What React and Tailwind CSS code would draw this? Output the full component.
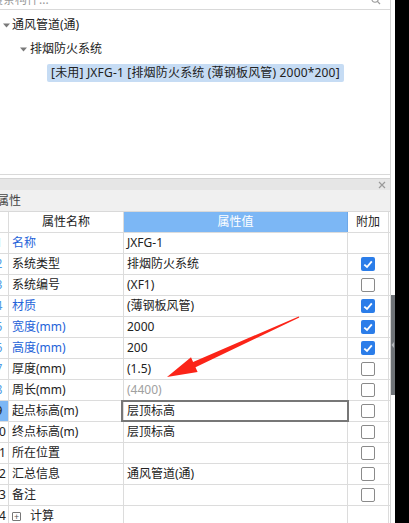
const rows = [
  { n: 1, name: "名称", blue: true, value: "JXFG-1", check: null },
  { n: 2, name: "系统类型", value: "排烟防火系统", check: true },
  { n: 3, name: "系统编号", value: "(XF1)", check: false },
  { n: 4, name: "材质", blue: true, value: "(薄钢板风管)", check: true },
  { n: 5, name: "宽度(mm)", blue: true, value: "2000", check: true },
  { n: 6, name: "高度(mm)", blue: true, value: "200", check: true },
  { n: 7, name: "厚度(mm)", value: "(1.5)", check: false },
  { n: 8, name: "周长(mm)", value: "(4400)", grey: true, check: false },
  { n: 9, name: "起点标高(m)", value: "层顶标高", check: false, selected: true },
  { n: 10, name: "终点标高(m)", value: "层顶标高", check: false },
  { n: 11, name: "所在位置", value: "", check: false },
  { n: 12, name: "汇总信息", value: "通风管道(通)", check: false },
  { n: 13, name: "备注", value: "", check: false },
  { n: 14, name: "计算", value: "", check: null, expand: true },
];

function Caret() {
  return (
    <svg width="7" height="5" viewBox="0 0 7 5" className="shrink-0">
      <path d="M0 0.5 L7 0.5 L3.5 4.5 Z" fill="#7a7a7a" />
    </svg>
  );
}

function Checkbox({ checked }) {
  if (checked) {
    return (
      <div className="w-[14px] h-[14px] rounded-[2px] bg-[#2b7de9] flex items-center justify-center">
        <svg width="10" height="9" viewBox="0 0 10 9">
          <path d="M1.3 4.6 L4 7 L8.8 1.4" fill="none" stroke="#fff" strokeWidth="1.9" />
        </svg>
      </div>
    );
  }
  return <div className="w-[14px] h-[14px] rounded-[2px] border border-[#8a8a8a] bg-white" />;
}

function PropRow({ row }) {
  return (
    <div className="flex shrink-0 h-[21px] border-b border-[#dcdcdc] text-[12px] leading-[20px]">
      <div
        className={`w-[9px] shrink-0 border-r border-[#dcdcdc] overflow-hidden flex ${
          row.selected ? "bg-[#7cb7f5]" : ""
        }`}
      >
        <span
          className={`w-[22px] -ml-[12px] shrink-0 text-center ${
            row.n <= 8 ? "text-[#4d9be6]" : "text-[#222]"
          }`}
        >
          {row.n}
        </span>
      </div>
      <div
        className={`w-[115px] shrink-0 border-r border-[#dcdcdc] pl-[3px] flex items-center gap-[9px] ${
          row.blue ? "text-[#2563d9]" : "text-[#222]"
        }`}
      >
        {row.expand && (
          <div className="w-[9px] h-[9px] border border-[#777] rounded-[1px] flex items-center justify-center text-[#555] text-[9px] leading-none">
            +
          </div>
        )}
        <span>{row.name}</span>
      </div>
      <div
        className={`shrink-0 border-r border-[#dcdcdc] ${
          row.grey ? "text-[#a0a0a0]" : "text-[#222]"
        } ${
          row.selected
            ? "w-[226px] -ml-[2px] pl-[5px] outline-2 outline-[#777] -outline-offset-1"
            : "w-[224px] pl-[3px]"
        }`}
      >
        {row.value}
      </div>
      <div className="w-[41px] shrink-0 border-r border-[#dcdcdc] flex items-center justify-center pr-[1px]">
        {row.check !== null && <Checkbox checked={row.check} />}
      </div>
    </div>
  );
}

export default function App() {
  return (
    <div
      className="relative w-[409px] h-[523px] overflow-hidden bg-black flex"
      style={{ fontFamily: '"Noto Sans", "Noto Sans CJK SC", sans-serif' }}
    >
      <div className="w-[391px] h-full bg-white border-r border-[#d4d4d4] flex flex-col shrink-0 overflow-hidden">
        {/* search box, mostly scrolled off */}
        <div className="h-[10px] shrink-0 border-b border-[#d9d9d9] overflow-hidden flex justify-between text-[12px] text-[#9a9a9a]">
          <span className="-mt-[9px] -ml-[9px] leading-[18px]">搜条构件...</span>
          <svg width="10" height="10" viewBox="0 0 10 10" className="-mt-[5px] mr-[9px]">
            <circle cx="4" cy="4" r="3.2" fill="none" stroke="#9a9a9a" strokeWidth="1.1" />
            <path d="M6.4 6.4 L9 9" stroke="#9a9a9a" strokeWidth="1.2" />
          </svg>
        </div>

        {/* tree */}
        <div className="h-[165px] shrink-0 border-b border-[#d9d9d9] text-[12px] text-[#222] leading-[18px] pt-[6px]">
          <div className="h-[18px] flex items-center gap-[2px] pl-[3px]">
            <Caret />
            <span>通风管道(通)</span>
          </div>
          <div className="h-[18px] mt-[6px] flex items-center gap-[3px] pl-[20px]">
            <Caret />
            <span>排烟防火系统</span>
          </div>
          <div className="mt-[6px] pl-[47px]">
            <div className="w-[297px] h-[18px] bg-[#c6dcf4] rounded-[2px] pl-[4px] whitespace-nowrap tracking-[0.18px]">
              [未用] JXFG-1 [排烟防火系统 (薄钢板风管) 2000*200]
            </div>
          </div>
        </div>

        <div className="h-[3px] shrink-0" />

        {/* properties title */}
        <div className="shrink-0 border-t border-[#d4d4d4] h-[12px] bg-[#e6e6e6] flex justify-end items-center pr-[4px]">
          <svg width="8" height="8" viewBox="0 0 8 8">
            <path d="M1 1 L7 7 M7 1 L1 7" stroke="#9a9a9a" strokeWidth="1.2" />
          </svg>
        </div>
        <div className="shrink-0 h-[22px] bg-[#f0f0f0] text-[12px] text-[#444] leading-[22px] -ml-[3px] border-b border-[#d9d9d9]">
          属性
        </div>

        {/* table header */}
        <div className="flex shrink-0 h-[21px] border-b border-[#dcdcdc] text-[12px] leading-[20px] text-[#222]">
          <div className="w-[9px] shrink-0 border-r border-[#dcdcdc]" />
          <div className="w-[115px] shrink-0 border-r border-[#dcdcdc] text-center">属性名称</div>
          <div className="w-[224px] shrink-0 border-r border-[#6ea8e8] bg-[#7cb7f5] text-center text-white">
            属性值
          </div>
          <div className="w-[41px] shrink-0 border-r border-[#dcdcdc] text-center">附加</div>
        </div>

        {rows.map((row) => (
          <PropRow key={row.n} row={row} />
        ))}
      </div>

      {/* side strip with splitter handle */}
      <div className="w-[4px] h-full bg-white flex flex-col shrink-0">
        <div className="h-[295px] shrink-0" />
        <div className="h-[100px] shrink-0 bg-[#6f7378] flex items-center justify-start">
          <svg width="4" height="8" viewBox="0 0 4 8">
            <path d="M3 1 L0.5 4 L3 7 Z" fill="#b5b8bb" />
          </svg>
        </div>
      </div>

      {/* red annotation arrow */}
      <svg className="absolute left-0 top-0 pointer-events-none" width="409" height="523" viewBox="0 0 409 523">
        <polygon
          points="167,377 191,357.3 193.1,361.9 298.7,316.4 299.3,317.6 195.5,367.3 197.6,371.9"
          fill="#fb2418"
        />
      </svg>
    </div>
  );
}
